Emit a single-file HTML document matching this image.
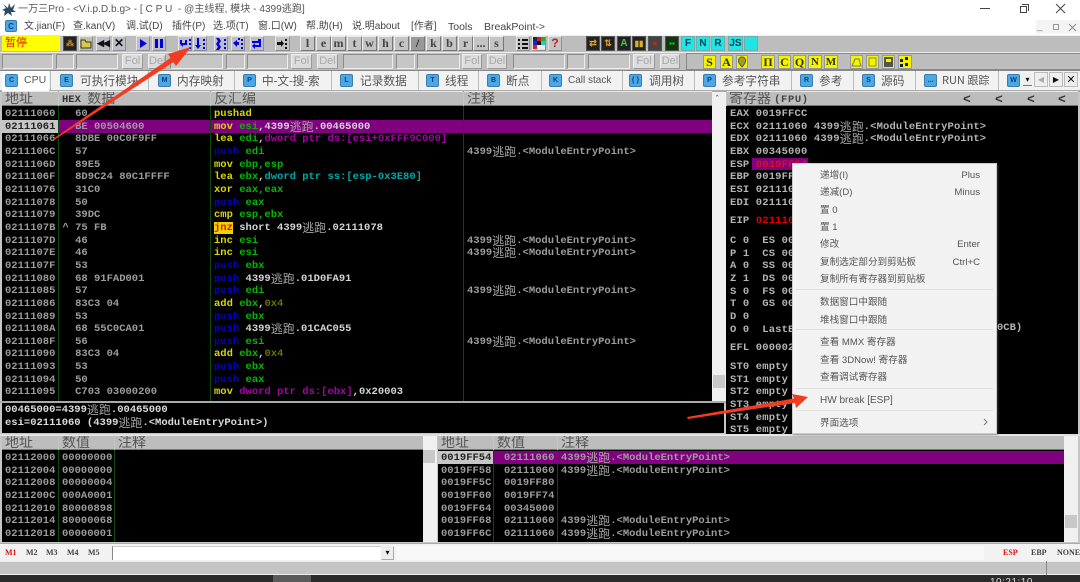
<!DOCTYPE html>
<html><head><meta charset="utf-8">
<style>
*{box-sizing:border-box}
html,body{margin:0;padding:0;background:#fff}
#p{position:relative;width:1080px;height:582px;overflow:hidden;background:#f4f4f4;font-family:"Liberation Sans","Noto Sans CJK SC",sans-serif;color:#333;filter:blur(.35px)}
.a{position:absolute}
.s{position:absolute;white-space:pre}
.blk{position:absolute;background:#000}
.col{position:absolute;white-space:pre;font:bold 10.5px/12.65px "Liberation Mono","Noto Sans CJK SC",monospace;color:#9c9c9c;overflow:hidden}
.col i{font:normal 12px/12.65px "Noto Sans CJK SC",sans-serif;color:#a6a6a6;display:inline-block;width:24px;height:12.65px;vertical-align:top}
.w{color:#d4d4d4}
.y{color:#d8d800}.g{color:#00b800}.b{color:#0000c8}.m{color:#a800a8}.c{color:#00a8a8}.o{color:#707000}.r{color:#e01010}
.hd{position:absolute;background:#bdbdbd;height:15px;border-top:1px solid #e8e8e8;border-bottom:1px solid #777;font:14px/13px "Noto Sans CJK SC",sans-serif;color:#555;white-space:pre;padding-left:3px;overflow:hidden}
.hd b{font:bold 10.5px/13px "Liberation Mono",monospace;color:#333;vertical-align:1px}
.v{position:absolute;width:1px;background:#0a4a0a}
.ib{position:absolute;top:36px;height:15px;width:14px;background:#bdbdc8;border:1px solid #8f8f8f;border-top-color:#e6e6e6;border-left-color:#e6e6e6;color:#0000d0;text-align:center;font:bold 11px/13px "Liberation Sans",sans-serif}
.lt{position:absolute;top:36px;height:15px;width:15px;background:#c4c4c4;border:1px solid #777;border-top-color:#eee;border-left-color:#eee;color:#444;text-align:center;font:bold 12px/13px "Liberation Serif",serif}
.dk{position:absolute;top:36px;height:15px;width:14px;background:#222;border:1px solid #555;text-align:center;font:bold 10px/13px "Liberation Sans",sans-serif}
.cy{position:absolute;top:36px;height:15px;width:14px;background:#1ee6e6;border:1px solid #7aa;color:#073b50;text-align:center;font:bold 10px/13px "Liberation Sans",sans-serif}
.in{position:absolute;top:54px;height:15px;background:#c6c6c6;border:1px solid #8a8a8a;border-right-color:#eee;border-bottom-color:#eee}
.fd{position:absolute;top:54px;height:15px;background:#dcdcdc;border:1px solid #eee;border-right-color:#999;border-bottom-color:#999;color:#a8a8a8;font:11px/13px "Liberation Sans",sans-serif;text-align:center}
.ye{position:absolute;top:55px;height:14px;background:#f4f400;border:1px solid #999;color:#333;text-align:center;font:bold 12px/13px "Liberation Serif",serif}
.ti{position:absolute;top:74px;width:13px;height:13px;background:#4aa8e6;border:1px solid #3b7cab;border-radius:2px;color:#123a7a;text-align:center;font:bold 7px/11px "Liberation Sans",sans-serif}
.tt{position:absolute;top:72px;white-space:pre;font:11.7px/17px "Noto Sans CJK SC",sans-serif;color:#555}
.ts{position:absolute;top:71px;width:1px;height:19px;background:#bbb}
.mi{position:absolute;white-space:pre;font:9.6px/14px "Liberation Sans","Noto Sans CJK SC",sans-serif;color:#555}
.sp{position:absolute;left:796px;width:197px;height:1px;background:#e0e0e0}
.mn{position:absolute;top:20px;white-space:pre;font:10px/14px "Liberation Sans","Noto Sans CJK SC",sans-serif;color:#444}
.bm{position:absolute;top:547px;font:bold 8px/11px "Liberation Serif",serif;color:#444}
</style></head><body><div id="p">

<!-- title bar -->
<div class="a" style="left:0;top:0;width:1080px;height:35px;background:#fff"></div>
<svg class="a" style="left:2px;top:2px" width="15" height="15" viewBox="0 0 15 15"><path d="M1 2l5 4 1-5 2 5 4-4-2 6 3 2-5 0 1 4-4-3-4 3 1-5-3-1 4-2z" fill="#274a66"/></svg>
<div class="s" style="left:18px;top:2px;font-size:10.1px;line-height:15px;color:#555">一万三Pro - &lt;V.i.p.D.b.g&gt; - [ C P U  - @主线程, 模块 - 4399逃跑]</div>
<div class="a" style="left:980px;top:8px;width:10px;height:1px;background:#444"></div>
<div class="a" style="left:1020px;top:6px;width:7px;height:7px;border:1px solid #444;background:#fff"></div>
<div class="a" style="left:1022px;top:4px;width:7px;height:7px;border-top:1px solid #444;border-right:1px solid #444"></div>
<svg class="a" style="left:1055px;top:3px" width="11" height="11"><path d="M1 1L10 10M10 1L1 10" stroke="#444" fill="none"/></svg>

<!-- menu -->
<div class="ti" style="left:5px;top:20px;width:12px;height:12px;color:#1a3a7a;font-size:8px">C</div>
<div class="mn" style="left:24px">文.jian(F)</div>
<div class="mn" style="left:73px">查.kan(V)</div>
<div class="mn" style="left:126px">调.试(D)</div>
<div class="mn" style="left:172px">插件(P)</div>
<div class="mn" style="left:213px">选.项(T)</div>
<div class="mn" style="left:258px">窗.口(W)</div>
<div class="mn" style="left:306px">帮.助(H)</div>
<div class="mn" style="left:352px">说.明about</div>
<div class="mn" style="left:411px">[作者]</div>
<div class="mn" style="left:448px;font-size:10.5px">Tools</div>
<div class="mn" style="left:484px;font-size:10.5px">BreakPoint-&gt;</div>
<div class="a" style="left:1036px;top:20px;width:44px;height:14px;background:#f4f4f4"></div>
<div class="s" style="left:1037px;top:21px;font:10px/12px 'Liberation Sans';color:#888">_</div>
<div class="a" style="left:1053px;top:24px;width:6px;height:6px;border:1px solid #999"></div>
<svg class="a" style="left:1068px;top:23px" width="9" height="9"><path d="M1 1L8 8M8 1L1 8" stroke="#888" fill="none"/></svg>

<!-- toolbars bg -->
<div class="a" style="left:0;top:35px;width:1080px;height:36px;background:#bdbdbd;border-top:1px solid #eee"></div>
<div class="a" style="left:0;top:52px;width:1080px;height:1px;background:#eee"></div>
<div class="a" style="left:0;top:70px;width:1080px;height:1px;background:#888"></div>
<div class="a" style="left:2px;top:35px;width:58px;height:16px;background:#ffff00;color:#e02000;font:11px/15px 'Noto Sans CJK SC',sans-serif;padding-left:3px">暂停</div>

<div class="dk" style="left:63px;color:#e09020;font-size:8px">⁂</div>
<div class="ib" style="left:79px;background:#c2c2a0"><svg width="12" height="13"><path d="M1 3h4l1 2h5v6H1z" fill="#d8c850" stroke="#333"/></svg></div>
<div class="ib" style="left:96px;color:#111;font-size:9px;letter-spacing:-1px">◀◀</div>
<div class="ib" style="left:112px;color:#111;font-size:12px">✕</div>
<div class="ib" style="left:136px"><svg width="12" height="13"><path d="M3 2l7 4.5-7 4.5z" fill="#0000d8"/></svg></div>
<div class="ib" style="left:152px"><svg width="12" height="13"><path d="M2 2h3v9H2zM7 2h3v9H7z" fill="#0000d8"/></svg></div>
<div class="ib" style="left:178px"><svg width="12" height="13"><path d="M1 3h2v3h3V3l2 0v5H4v2L1 7zM10 2h2v2h-2zM10 6h2v2h-2zM10 10h2v2h-2z" fill="#0000d8"/></svg></div>
<div class="ib" style="left:193px"><svg width="12" height="13"><path d="M3 1h2v7h2l-3 4-3-4h2zM9 2h2v2H9zM9 6h2v2H9zM9 10h2v2H9z" fill="#0000d8"/></svg></div>
<div class="ib" style="left:214px"><svg width="12" height="13"><path d="M1 1l3 0 2 3-2 3 2 3-2 3H1l2-3-2-3 2-3zM9 2h2v2H9zM9 6h2v2H9zM9 10h2v2H9z" fill="#0000d8"/></svg></div>
<div class="ib" style="left:231px"><svg width="12" height="13"><path d="M1 6l4-3v2h2v3H5v2zM6 1h2v2H6zM9 2h2v2H9zM9 6h2v2H9zM9 10h2v2H9z" fill="#0000d8"/></svg></div>
<div class="ib" style="left:250px"><svg width="12" height="13"><path d="M1 4h6V2h3v8H4v2L1 9l3-3v2h4V6H1z" fill="#0000d8"/></svg></div>
<div class="ib" style="left:275px;width:15px;background:#c4c4c4"><svg width="13" height="13"><path d="M1 5h4V3l3 3.5L5 10V8H1zM9 2h2v2H9zM9 6h2v2H9zM9 10h2v2H9z" fill="#111"/></svg></div>

<div class="lt" style="left:300px">l</div><div class="lt" style="left:316px">e</div><div class="lt" style="left:331px">m</div><div class="lt" style="left:347px">t</div><div class="lt" style="left:362px">w</div><div class="lt" style="left:378px">h</div><div class="lt" style="left:394px">c</div><div class="lt" style="left:410px;background:#999;color:#222">/</div><div class="lt" style="left:426px">k</div><div class="lt" style="left:442px">b</div><div class="lt" style="left:458px">r</div><div class="lt" style="left:473px;width:16px">...</div><div class="lt" style="left:489px">s</div>

<div class="ib" style="left:516px;background:#c4c4c4"><svg width="12" height="13"><path d="M1 2h2v2H1zM5 2h6v2H5zM1 6h2v2H1zM5 6h6v2H5zM1 10h2v2H1zM5 10h6v2H5z" fill="#111"/></svg></div>
<div class="ib" style="left:532px;background:#ddd"><svg width="12" height="13"><path d="M0 0h4v4H0z" fill="#224"/><path d="M4 0h4v4H4z" fill="#c22"/><path d="M8 0h4v4H8z" fill="#2a2"/><path d="M0 4h4v4H0z" fill="#22c"/><path d="M4 4h4v4H4z" fill="#111"/><path d="M8 4h4v4H8z" fill="#2cc"/><path d="M0 8h4v4H0z" fill="#c22"/><path d="M4 8h4v4H4z" fill="#eee"/><path d="M8 8h4v4H8z" fill="#eee"/></svg></div>
<div class="ib" style="left:548px;background:#c4c4c4;color:#c02020;font-size:12px">?</div>

<div class="dk" style="left:586px;color:#e8a020;font-size:9px">⇄</div>
<div class="dk" style="left:601px;color:#e8a020;font-size:9px">⇅</div>
<div class="dk" style="left:617px;color:#40d040">A</div>
<div class="dk" style="left:632px;color:#d8b020;font-size:8px">▮▮</div>
<div class="dk" style="left:648px;background:#444;color:#d02020;font-size:9px">●</div>
<div class="dk" style="left:665px;background:#0a3a0a;color:#40c040;font-size:8px">▪▪</div>
<div class="cy" style="left:681px">F</div><div class="cy" style="left:696px">N</div><div class="cy" style="left:711px">R</div><div class="cy" style="left:728px;width:15px">JS</div><div class="cy" style="left:744px">&nbsp;</div>

<div class="in" style="left:2px;width:51px"></div><div class="in" style="left:56px;width:18px"></div><div class="in" style="left:76px;width:42px"></div>
<div class="fd" style="left:122px;width:21px">Fol</div><div class="fd" style="left:148px;width:18px">Del</div>
<div class="in" style="left:170px;width:53px"></div><div class="in" style="left:226px;width:19px"></div><div class="in" style="left:247px;width:41px"></div>
<div class="fd" style="left:291px;width:21px">Fol</div><div class="fd" style="left:317px;width:21px">Del</div>
<div class="in" style="left:343px;width:50px"></div><div class="in" style="left:396px;width:19px"></div><div class="in" style="left:417px;width:43px"></div>
<div class="fd" style="left:462px;width:20px">Fol</div><div class="fd" style="left:487px;width:20px">Del</div>
<div class="in" style="left:513px;width:52px"></div><div class="in" style="left:567px;width:18px"></div><div class="in" style="left:588px;width:42px"></div>
<div class="fd" style="left:633px;width:22px">Fol</div><div class="fd" style="left:660px;width:20px">Del</div>
<div class="a" style="left:686px;top:53px;width:394px;height:17px;border:1px solid #888;border-right:none"></div>
<div class="ye" style="left:703px;width:13px">S</div><div class="ye" style="left:720px;width:13px">A</div>
<div class="ye" style="left:736px;width:12px"><svg width="10" height="12"><path d="M5 1a3.6 3.6 0 0 1 3.6 3.6C8.600 7 5 11 5 11S1.400 7 1.400 4.600A3.600 3.600 0 0 1 5 1z" fill="#a0a020" stroke="#555"/></svg></div>
<div class="ye" style="left:761px;width:14px">Π</div><div class="ye" style="left:778px;width:13px">C</div><div class="ye" style="left:793px;width:13px">Q</div><div class="ye" style="left:808px;width:14px;font-size:11px">N</div><div class="ye" style="left:824px;width:14px;font-size:11px">M</div>
<div class="ye" style="left:850px;width:13px;color:#776"><svg width="11" height="12"><path d="M1 10l3-7h4l2 7z" fill="none" stroke="#776"/></svg></div>
<div class="ye" style="left:866px;width:13px"><svg width="11" height="12"><path d="M2 2h7v8H2z" fill="none" stroke="#885"/></svg></div>
<div class="ye" style="left:882px;width:13px"><svg width="11" height="12"><path d="M1 1h9v10H1zM3 3v3h5V3z" fill="#554" fill-rule="evenodd"/></svg></div>
<div class="ye" style="left:898px;width:14px"><svg width="12" height="12"><path d="M1 3h3v3H1zM6 1h3v3H6zM1 8h3v3H1zM6 7h3v3H6z" fill="#124"/></svg></div>

<!-- tabs -->
<div class="a" style="left:0;top:71px;width:1080px;height:19px;background:#f2f2f2"></div>
<div class="a" style="left:0;top:90px;width:1080px;height:2px;background:#aaa"></div>
<div class="a" style="left:2px;top:71px;width:47px;height:20px;background:#fff"></div>
<div class="ti" style="left:5px">C</div><div class="tt" style="left:24px;font-size:10.5px;font-family:'Liberation Sans'">CPU</div>
<div class="ts" style="left:50px"></div>
<div class="ti" style="left:60px">E</div><div class="tt" style="left:80px">可执行模块</div><div class="ts" style="left:148px"></div>
<div class="ti" style="left:158px">M</div><div class="tt" style="left:177px">内存映射</div><div class="ts" style="left:234px"></div>
<div class="ti" style="left:243px">P</div><div class="tt" style="left:262px;letter-spacing:-.2px">中-文-搜-索</div><div class="ts" style="left:331px"></div>
<div class="ti" style="left:340px">L</div><div class="tt" style="left:360px">记录数据</div><div class="ts" style="left:418px"></div>
<div class="ti" style="left:426px">T</div><div class="tt" style="left:445px">线程</div><div class="ts" style="left:478px"></div>
<div class="ti" style="left:487px">B</div><div class="tt" style="left:506px">断点</div><div class="ts" style="left:541px"></div>
<div class="ti" style="left:549px">K</div><div class="tt" style="left:568px;font-size:10px;font-family:'Liberation Sans'">Call stack</div><div class="ts" style="left:622px"></div>
<div class="ti" style="left:629px">{ }</div><div class="tt" style="left:649px">调用树</div><div class="ts" style="left:694px"></div>
<div class="ti" style="left:703px">P</div><div class="tt" style="left:722px">参考字符串</div><div class="ts" style="left:791px"></div>
<div class="ti" style="left:800px">R</div><div class="tt" style="left:819px">参考</div><div class="ts" style="left:853px"></div>
<div class="ti" style="left:862px">S</div><div class="tt" style="left:881px">源码</div><div class="ts" style="left:915px"></div>
<div class="ti" style="left:924px">...</div><div class="tt" style="left:942px;font-size:11px">RUN 跟踪</div><div class="ts" style="left:998px"></div>
<div class="ti" style="left:1007px">W</div>
<div class="a" style="left:1023px;top:74px;width:9px;height:12px;background:#eee;border-bottom:1px solid #777;color:#111;font:8px/12px 'DejaVu Sans';text-align:center">▾</div>
<div class="a" style="left:1034px;top:72px;width:14px;height:15px;background:#eee;border:1px solid #bbb;color:#aaa;font:8px/13px 'DejaVu Sans';text-align:center">◀</div>
<div class="a" style="left:1049px;top:72px;width:14px;height:15px;background:#eee;border:1px solid #bbb;color:#111;font:8px/13px 'DejaVu Sans';text-align:center">▶</div>
<div class="a" style="left:1064px;top:72px;width:14px;height:15px;background:#eee;border:1px solid #bbb;color:#111;font:bold 11px/13px 'DejaVu Sans';text-align:center">✕</div>

<!-- main bg -->
<div class="a" style="left:0;top:92px;width:1080px;height:452px;background:#c6c6c6"></div>

<!-- disasm headers -->
<div class="hd" style="left:2px;top:91px;width:56px">地址</div>
<div class="hd" style="left:59px;top:91px;width:151px"><b>HEX </b>数据</div>
<div class="hd" style="left:211px;top:91px;width:252px">反汇编</div>
<div class="hd" style="left:464px;top:91px;width:248px">注释</div>
<div class="blk" style="left:2px;top:106px;width:710px;height:295px"></div>
<div class="a" style="left:2px;top:120px;width:56px;height:13px;background:#c6c6c6"></div>
<div class="a" style="left:58px;top:120px;width:654px;height:13px;background:#800080"></div>
<div class="v" style="left:58px;top:106px;height:295px"></div>
<div class="v" style="left:210px;top:106px;height:295px"></div>
<div class="v" style="left:463px;top:106px;height:295px"></div>

<div class="col" style="left:5px;top:108px;width:53px;height:293px">02111060
<span style="color:#222">02111061</span>
02111066
0211106C
0211106D
0211106F
02111076
02111078
02111079
0211107B
0211107D
0211107E
0211107F
02111080
02111085
02111086
02111089
0211108A
0211108F
02111090
02111093
02111094
02111095</div>

<div class="col" style="left:62.5px;top:108px;width:147px;height:293px">  60
  BE 00504600
  8DBE 00C0F9FF
  57
  89E5
  8D9C24 80C1FFFF
  31C0
  50
  39DC
^ 75 FB
  46
  46
  53
  68 91FAD001
  57
  83C3 04
  53
  68 55C0CA01
  56
  83C3 04
  53
  50
  C703 03000200</div>

<div class="col" style="left:214px;top:108px;width:248px;height:293px"><span class="y">pushad</span>
<span class="y">mov</span> <span class="g">esi</span><span class="w">,4399<i class="w">逃跑</i>.00465000</span>
<span class="y">lea</span> <span class="g">edi</span><span class="w">,</span><span class="m">dword ptr ds:[esi+0xFFF9C000]</span>
<span class="b">push</span> <span class="g">edi</span>
<span class="y">mov</span> <span class="g">ebp,esp</span>
<span class="y">lea</span> <span class="g">ebx</span><span class="w">,</span><span class="c">dword ptr ss:[esp-0x3E80]</span>
<span class="y">xor</span> <span class="g">eax,eax</span>
<span class="b">push</span> <span class="g">eax</span>
<span class="y">cmp</span> <span class="g">esp,ebx</span>
<span style="background:#f4d000;color:#d02000">jnz</span> <span class="w">short 4399<i class="w">逃跑</i>.02111078</span>
<span class="y">inc</span> <span class="g">esi</span>
<span class="y">inc</span> <span class="g">esi</span>
<span class="b">push</span> <span class="g">ebx</span>
<span class="b">push</span> <span class="w">4399<i class="w">逃跑</i>.01D0FA91</span>
<span class="b">push</span> <span class="g">edi</span>
<span class="y">add</span> <span class="g">ebx</span><span class="w">,</span><span class="o">0x4</span>
<span class="b">push</span> <span class="g">ebx</span>
<span class="b">push</span> <span class="w">4399<i class="w">逃跑</i>.01CAC055</span>
<span class="b">push</span> <span class="g">esi</span>
<span class="y">add</span> <span class="g">ebx</span><span class="w">,</span><span class="o">0x4</span>
<span class="b">push</span> <span class="g">ebx</span>
<span class="b">push</span> <span class="g">eax</span>
<span class="y">mov</span> <span class="m">dword ptr ds:[ebx]</span><span class="w">,0x20003</span></div>

<div class="col" style="left:467px;top:108px;width:244px;height:293px">


4399<i>逃跑</i>.&lt;ModuleEntryPoint&gt;






4399<i>逃跑</i>.&lt;ModuleEntryPoint&gt;
4399<i>逃跑</i>.&lt;ModuleEntryPoint&gt;


4399<i>逃跑</i>.&lt;ModuleEntryPoint&gt;



4399<i>逃跑</i>.&lt;ModuleEntryPoint&gt;</div>

<!-- scrollbar main -->
<div class="a" style="left:712px;top:92px;width:14px;height:309px;background:#f0f0f0"></div>
<div class="a" style="left:715px;top:95px;font:9px/10px 'DejaVu Sans';color:#555">ˆ</div>
<div class="a" style="left:713px;top:375px;width:12px;height:13px;background:#c8c8c8"></div>

<!-- info pane -->
<div class="a" style="left:0;top:401px;width:726px;height:2px;background:#aaa"></div>
<div class="blk" style="left:2px;top:403px;width:722px;height:30px"></div>
<div class="col w" style="left:5px;top:404px;width:500px;height:29px;color:#dcdcdc">00465000=4399<i class="w">逃跑</i>.00465000
esi=02111060 (4399<i class="w">逃跑</i>.&lt;ModuleEntryPoint&gt;)</div>

<!-- registers -->
<div class="hd" style="left:727px;top:91px;width:351px;padding-left:2px">寄存器 <b style="letter-spacing:.6px;color:#444">(FPU)</b></div>
<div class="s" style="left:963px;top:92px;font:bold 13px/15px 'Liberation Mono';color:#333">&lt;</div>
<div class="s" style="left:995px;top:92px;font:bold 13px/15px 'Liberation Mono';color:#333">&lt;</div>
<div class="s" style="left:1027px;top:92px;font:bold 13px/15px 'Liberation Mono';color:#333">&lt;</div>
<div class="s" style="left:1058px;top:92px;font:bold 13px/15px 'Liberation Mono';color:#333">&lt;</div>
<div class="blk" style="left:726px;top:106px;width:352px;height:328px"></div>
<div class="a" style="left:752px;top:158px;width:56px;height:12px;background:#800080"></div>
<div class="col" style="left:730px;top:108px;width:345px;height:110px;letter-spacing:.15px;color:#b4b4b4">EAX 0019FFCC
ECX 02111060 4399<i>逃跑</i>.&lt;ModuleEntryPoint&gt;
EDX 02111060 4399<i>逃跑</i>.&lt;ModuleEntryPoint&gt;
EBX 00345000
ESP <span class="r">0019FF54</span>
EBP 0019FF80
ESI 02111060
EDI 02111060</div>
<div class="col" style="left:730px;top:215px;width:70px;height:14px;letter-spacing:.15px;color:#b4b4b4">EIP <span style="color:#e00000">02111060</span></div>
<div class="col" style="left:730px;top:235px;width:70px;height:104px;letter-spacing:.15px;color:#b4b4b4">C 0  ES 002B
P 1  CS 0023
A 0  SS 002B
Z 1  DS 002B
S 0  FS 0053
T 0  GS 002B
D 0
O 0  LastErr</div>
<div class="s" style="left:997px;top:322px;font:bold 10.5px/13px 'Liberation Mono';color:#b4b4b4">0CB)</div>
<div class="col" style="left:730px;top:342px;width:70px;height:14px;letter-spacing:.15px;color:#b4b4b4">EFL 00000246</div>
<div class="col" style="left:730px;top:361px;width:70px;height:73px;letter-spacing:.15px;color:#b4b4b4">ST0 empty
ST1 empty
ST2 empty
ST3 empty
ST4 empty
ST5 empty</div>

<!-- bottom panes -->
<div class="a" style="left:0;top:434px;width:1080px;height:2px;background:#ddd"></div>
<div class="hd" style="left:2px;top:435px;width:56px">地址</div>
<div class="hd" style="left:59px;top:435px;width:55px">数值</div>
<div class="hd" style="left:115px;top:435px;width:308px">注释</div>
<div class="blk" style="left:2px;top:450px;width:421px;height:92px"></div>
<div class="v" style="left:58px;top:450px;height:92px"></div>
<div class="v" style="left:114px;top:450px;height:92px"></div>
<div class="col" style="left:5px;top:452px;width:53px;height:90px">02112000
02112004
02112008
0211200C
02112010
02112014
02112018</div>
<div class="col" style="left:62px;top:452px;width:52px;height:90px">00000000
00000000
00000004
000A0001
80000898
80000068
00000001</div>
<div class="a" style="left:423px;top:436px;width:14px;height:106px;background:#f0f0f0"></div>
<div class="a" style="left:423px;top:450px;width:12px;height:13px;background:#c8c8c8"></div>

<div class="hd" style="left:438px;top:435px;width:55px">地址</div>
<div class="hd" style="left:494px;top:435px;width:63px">数值</div>
<div class="hd" style="left:558px;top:435px;width:506px">注释</div>
<div class="blk" style="left:438px;top:450px;width:626px;height:92px"></div>
<div class="a" style="left:438px;top:451px;width:55px;height:13px;background:#c6c6c6"></div>
<div class="a" style="left:493px;top:451px;width:571px;height:13px;background:#800080"></div>
<div class="v" style="left:493px;top:450px;height:92px"></div>
<div class="v" style="left:557px;top:450px;height:92px"></div>
<div class="col" style="left:441px;top:452px;width:52px;height:90px"><span style="color:#222">0019FF54</span>
0019FF58
0019FF5C
0019FF60
0019FF64
0019FF68
0019FF6C</div>
<div class="col" style="left:504px;top:452px;width:53px;height:90px">02111060
02111060
0019FF80
0019FF74
00345000
02111060
02111060</div>
<div class="col" style="left:561px;top:452px;width:300px;height:90px">4399<i>逃跑</i>.&lt;ModuleEntryPoint&gt;
4399<i>逃跑</i>.&lt;ModuleEntryPoint&gt;



4399<i>逃跑</i>.&lt;ModuleEntryPoint&gt;
4399<i>逃跑</i>.&lt;ModuleEntryPoint&gt;</div>
<div class="a" style="left:1064px;top:436px;width:14px;height:106px;background:#f0f0f0"></div>
<div class="a" style="left:1065px;top:515px;width:12px;height:13px;background:#c8c8c8"></div>

<!-- command row -->
<div class="a" style="left:0;top:543px;width:1080px;height:18px;background:#f2f2f2;border-top:1px solid #aaa"></div>
<div class="bm" style="left:5px;color:#e01010">M1</div><div class="bm" style="left:26px">M2</div><div class="bm" style="left:46px">M3</div><div class="bm" style="left:67px">M4</div><div class="bm" style="left:88px">M5</div>
<div class="a" style="left:112px;top:546px;width:282px;height:14px;background:#fff;border-left:1px solid #888;border-top:1px solid #ccc"></div>
<div class="a" style="left:381px;top:546px;width:13px;height:14px;background:#eee;border:1px solid #aaa;border-left-color:#eee;border-top-color:#eee;font:8px/12px 'DejaVu Sans';color:#111;text-align:center">▾</div>
<div class="a" style="left:396px;top:546px;width:588px;height:14px;background:#f8f8f8"></div>
<div class="bm" style="left:1003px;color:#e01010">ESP</div><div class="bm" style="left:1031px">EBP</div><div class="bm" style="left:1057px">NONE</div>

<!-- status -->
<div class="a" style="left:0;top:561px;width:1080px;height:14px;background:#c4c4c4;border-top:1px solid #eee;border-bottom:1px solid #eee"></div>
<div class="a" style="left:1046px;top:561px;width:1px;height:14px;background:#888"></div>
<div class="a" style="left:0;top:575px;width:1080px;height:7px;background:#2b2b2b"></div>
<div class="a" style="left:273px;top:575px;width:38px;height:7px;background:#5a5a5a"></div>
<div class="s" style="left:990px;top:577px;font:10px/12px 'Liberation Sans';color:#ddd;letter-spacing:.5px">10:21:10</div>

<!-- context menu -->
<div class="a" style="left:792px;top:163px;width:205px;height:271px;background:#f2f2f2;border:1px solid #ccc;box-shadow:1px 1px 2px rgba(90,90,90,.6)"></div>
<div class="mi" style="left:820px;top:169px">递增(I)</div><div class="mi" style="right:100px;top:169px">Plus</div>
<div class="mi" style="left:820px;top:186px">递减(D)</div><div class="mi" style="right:100px;top:186px">Minus</div>
<div class="mi" style="left:820px;top:204px">置 0</div>
<div class="mi" style="left:820px;top:221px">置 1</div>
<div class="mi" style="left:820px;top:238px">修改</div><div class="mi" style="right:100px;top:238px">Enter</div>
<div class="mi" style="left:820px;top:256px">复制选定部分到剪贴板</div><div class="mi" style="right:100px;top:256px">Ctrl+C</div>
<div class="mi" style="left:820px;top:273px">复制所有寄存器到剪贴板</div>
<div class="sp" style="top:289px"></div>
<div class="mi" style="left:820px;top:296px">数据窗口中跟随</div>
<div class="mi" style="left:820px;top:314px">堆栈窗口中跟随</div>
<div class="sp" style="top:329px"></div>
<div class="mi" style="left:820px;top:336px">查看 MMX 寄存器</div>
<div class="mi" style="left:820px;top:354px">查看 3DNow! 寄存器</div>
<div class="mi" style="left:820px;top:371px">查看调试寄存器</div>
<div class="sp" style="top:388px"></div>
<div class="mi" style="left:820px;top:394px;font-size:10px">HW break [ESP]</div>
<div class="sp" style="top:410px"></div>
<div class="mi" style="left:820px;top:417px">界面选项</div>
<svg class="a" style="left:983px;top:418px" width="6" height="8"><path d="M1 1l3 3-3 3" fill="none" stroke="#777"/></svg>

<!-- red arrows -->
<svg class="a" style="left:0;top:0" width="1080" height="582"><path d="M53 139L170.600 57.900 168 54 191 47 176 66 173.400 62.100 54 140z" fill="#f03c20"/><path d="M687 417L794 398.500 792 394 808 397 796 408 795 403 688 419z" fill="#f03c20"/></svg>

</div></body></html>
